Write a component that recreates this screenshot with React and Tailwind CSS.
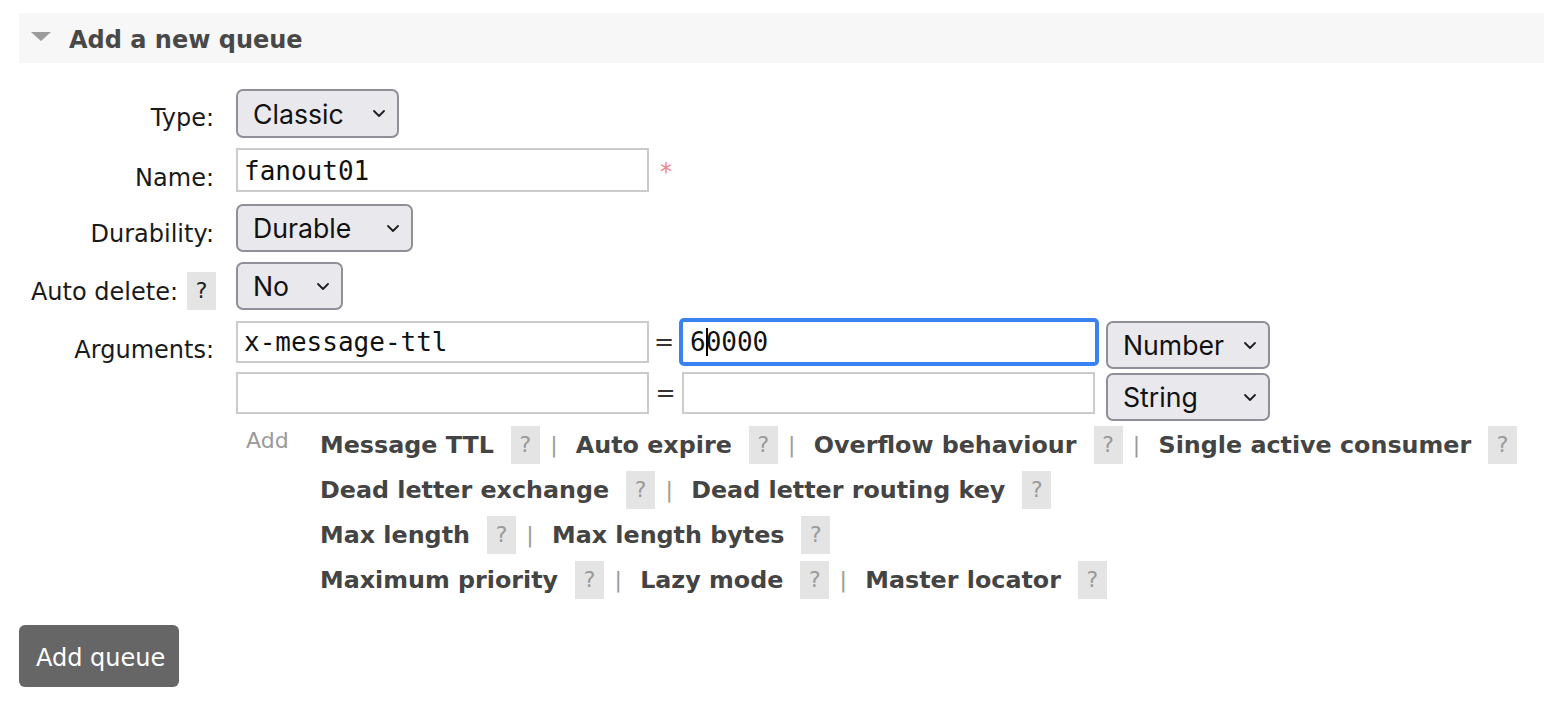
import React from "react";

const sans = "font-['DejaVu_Sans',Verdana,sans-serif]";
const mono = "font-['DejaVu_Sans_Mono',monospace]";
const ui = "font-['Inter','Liberation_Sans',sans-serif]";

function Chevron() {
  return (
    <svg width="12" height="7" viewBox="0 0 12 7" className="shrink-0">
      <path d="M1 1l5 5 5-5" fill="none" stroke="#1f1f1f" strokeWidth="1.8" strokeLinecap="round" strokeLinejoin="round" />
    </svg>
  );
}

function FakeSelect({ value, width, className = "" }) {
  return (
    <div
      className={`h-[48px] flex items-center justify-between pl-[15px] pr-[12px] border-2 border-[#8f8f99] rounded-[7px] bg-[#e9e9ed] text-[26.67px] text-[#111] ${ui} ${className}`}
      style={{ width }}
    >
      <span>{value}</span>
      <Chevron />
    </div>
  );
}

function TextBox({ value, className = "" }) {
  return (
    <div className={`w-[413px] border-2 border-[#cbcbcb] bg-white flex items-center pl-[6px] text-[26px] text-[#111] ${mono} ${className}`}>
      {value}
    </div>
  );
}

function HelpBox({ dark }) {
  return (
    <span
      className={`inline-flex items-center justify-center w-[29px] h-[38px] bg-[#e4e4e4] text-[22px] font-normal ${sans} ${dark ? "text-[#222]" : "text-[#9a9a9a]"}`}
    >
      ?
    </span>
  );
}

const helpLines = [
  ["Message TTL", "Auto expire", "Overflow behaviour", "Single active consumer"],
  ["Dead letter exchange", "Dead letter routing key"],
  ["Max length", "Max length bytes"],
  ["Maximum priority", "Lazy mode", "Master locator"],
];

function Label({ children, pt }) {
  return (
    <div className={`w-[197px] shrink-0 text-right pr-[2px] leading-[28px] text-[24px] text-[#1a1a1a] ${pt}`}>
      {children}
    </div>
  );
}

export default function App() {
  return (
    <div className={`min-h-screen bg-white pl-[19px] pt-[13px] ${sans}`}>
      {/* Section header */}
      <div className="h-[50px] bg-[#f7f7f7] flex items-center">
        <svg width="20" height="9" viewBox="0 0 20 9" className="ml-[12px] mt-[-3px]">
          <polygon points="0,0 20,0 10,9" fill="#9c9c9c" />
        </svg>
        <h2 className="ml-[18px] mt-[4px] text-[24px] leading-[28px] font-bold text-[#484848]">Add a new queue</h2>
      </div>

      {/* Type */}
      <div className="flex items-start mt-[26px]">
        <Label pt="pt-[15px]">Type:</Label>
        <FakeSelect value="Classic" width={163} className="ml-[20px] h-[49px]" />
      </div>

      {/* Name */}
      <div className="flex items-start mt-[10px]">
        <Label pt="pt-[16px]">Name:</Label>
        <TextBox value="fanout01" className="ml-[20px] h-[44px] pt-[3px]" />
        <span className="ml-[11px] mt-[10px] text-[24px] leading-[28px] text-[#f08585]">*</span>
      </div>

      {/* Durability */}
      <div className="flex items-start mt-[12px]">
        <Label pt="pt-[16px]">Durability:</Label>
        <FakeSelect value="Durable" width={177} className="ml-[20px]" />
      </div>

      {/* Auto delete */}
      <div className="flex items-start mt-[10px]">
        <div className="w-[197px] shrink-0 mt-[10px] h-[38px] flex items-center justify-end text-[24px] leading-[28px] text-[#1a1a1a]">
          <span className="mt-[2px]">Auto delete:</span>
          <span className="ml-[9px]">
            <HelpBox dark />
          </span>
        </div>
        <FakeSelect value="No" width={107} className="ml-[20px]" />
      </div>

      {/* Arguments row 1 */}
      <div className="flex items-start mt-[8px] h-[53px]">
        <Label pt="pt-[18px]">Arguments:</Label>
        <TextBox value="x-message-ttl" className="ml-[20px] mt-[3px] h-[42px]" />
        <div className="w-[30px] mt-[3px] h-[42px] flex items-center justify-center text-[24px] text-[#333]">=</div>
        <div className={`w-[420px] h-[48px] border-[4px] border-[#3a82f1] rounded-[5px] bg-white flex items-center pl-[7px] text-[26px] text-[#111] ${mono}`}>
          <span>6</span>
          <span className="w-[2px] h-[28px] bg-black" />
          <span className="ml-[-2px]">0000</span>
        </div>
        <FakeSelect value="Number" width={164} className="ml-[7px] mt-[3px]" />
      </div>

      {/* Arguments row 2 */}
      <div className="flex items-start h-[51px]">
        <div className="w-[197px] shrink-0" />
        <TextBox value="" className="ml-[20px] mt-[1px] h-[42px]" />
        <div className="w-[33px] mt-[1px] h-[42px] flex items-center justify-center text-[24px] text-[#333]">=</div>
        <TextBox value="" className="h-[42px] mt-[1px]" />
        <FakeSelect value="String" width={164} className="ml-[11px] mt-[2px]" />
      </div>

      {/* Add + help links */}
      <div className="flex items-start">
        <div className="w-[197px] shrink-0" />
        <div className="ml-[20px] w-[84px] shrink-0 pl-[10px] pt-[6px] text-[22px] leading-[26px] text-[#9a9a9a]">Add</div>
        <div className="flex flex-col">
          {helpLines.map((line, i) => (
            <div key={i} className="h-[45px] flex items-center text-[23.8px] font-bold text-[#444]">
              {line.map((item, j) => (
                <React.Fragment key={item}>
                  {j > 0 && (
                    <span className="ml-[10px] mr-[18px] w-[8px] text-center font-normal text-[22px] text-[#9a9a9a]">|</span>
                  )}
                  <span className="whitespace-nowrap mt-[2px]">{item}</span>
                  <span className="ml-[17px] flex">
                    <HelpBox />
                  </span>
                </React.Fragment>
              ))}
            </div>
          ))}
        </div>
      </div>

      {/* Submit */}
      <button className="mt-[23px] h-[62px] w-[160px] rounded-[6px] bg-[#666] text-white text-[24px] text-left pl-[17px] pt-[3px]">
        Add queue
      </button>
    </div>
  );
}
